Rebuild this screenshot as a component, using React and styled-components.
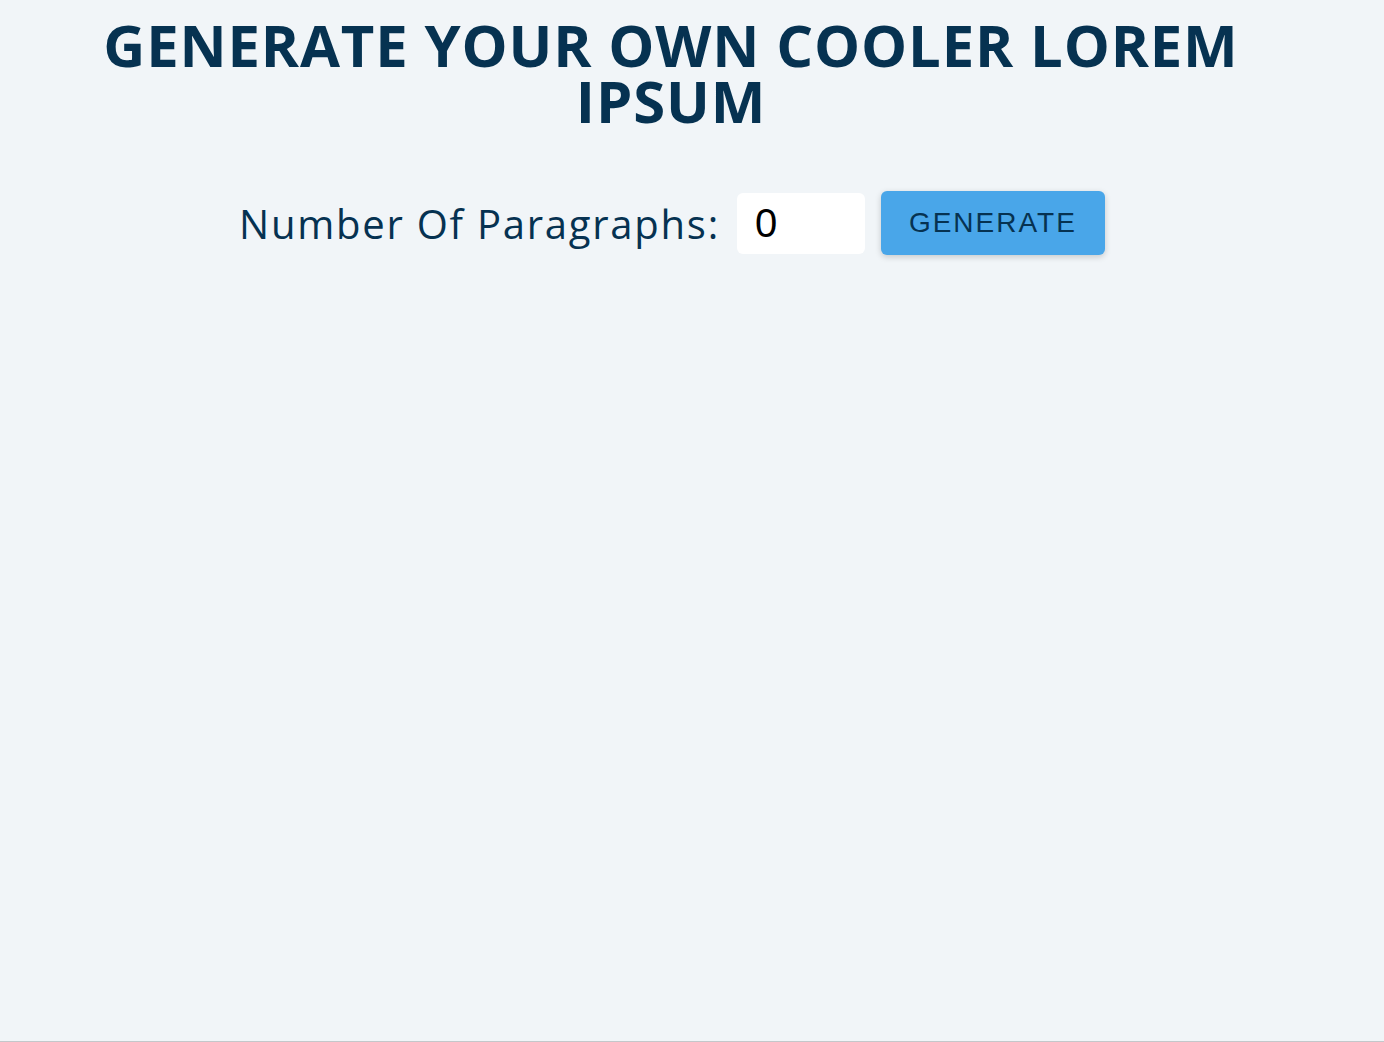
import React, { useState } from "react";
import styled, { createGlobalStyle } from "styled-components";

const GlobalStyle = createGlobalStyle`
  * {
    box-sizing: border-box;
  }
  body {
    margin: 0;
    background: #f1f5f8;
    font-family: "Open Sans", "Noto Sans", sans-serif;
    color: #063251;
  }
`;

const Page = styled.div`
  min-height: 100vh;
  padding-right: 42px;
  border-bottom: 1px solid #c4c7ca;
`;

const Section = styled.section`
  display: flex;
  flex-direction: column;
  align-items: center;
  padding-top: 17px;
`;

const Title = styled.h1`
  margin: 0;
  max-width: 1200px;
  font-family: "Open Sans", sans-serif;
  font-weight: 700;
  font-size: 58px;
  line-height: 56px;
  letter-spacing: 0.85px;
  text-transform: uppercase;
  text-align: center;
  color: #063251;
`;

const Form = styled.form`
  display: flex;
  align-items: center;
  margin-top: 62px;
  padding-left: 2px;
`;

const Label = styled.label`
  font-family: "Open Sans", sans-serif;
  font-size: 40px;
  letter-spacing: 1.75px;
  color: #063251;
  margin-right: 17px;
`;

const Input = styled.input`
  width: 128px;
  height: 61px;
  border: none;
  border-radius: 6px;
  background: #fff;
  padding: 0 18px;
  font-family: "Liberation Sans", Arial, sans-serif;
  font-size: 40px;
  color: #000;
  outline: none;
`;

const Button = styled.button`
  margin-left: 16px;
  width: 224px;
  height: 64px;
  border: none;
  border-radius: 6px;
  background: #49a6e9;
  color: #063251;
  font-family: "Liberation Sans", Arial, sans-serif;
  font-size: 28px;
  letter-spacing: 2px;
  text-transform: uppercase;
  box-shadow: 0 2px 6px rgba(0, 0, 0, 0.18);
  cursor: pointer;
`;

export default function App() {
  const [count, setCount] = useState(0);
  return (
    <Page>
      <GlobalStyle />
      <Section>
        <Title>Generate your own cooler lorem ipsum</Title>
        <Form onSubmit={(e) => e.preventDefault()}>
          <Label htmlFor="amount">Number Of Paragraphs:</Label>
          <Input
            type="number"
            id="amount"
            value={count}
            onChange={(e) => setCount(e.target.value)}
          />
          <Button type="submit">Generate</Button>
        </Form>
      </Section>
    </Page>
  );
}
